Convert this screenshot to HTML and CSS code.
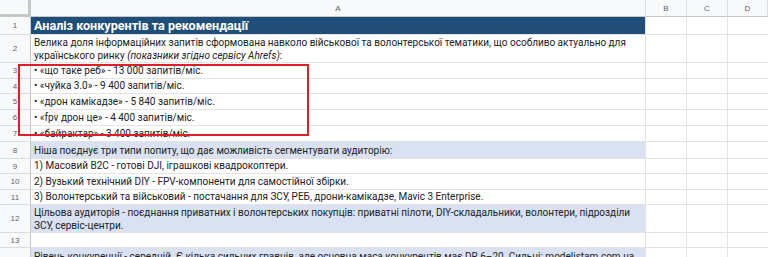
FILE: index.html
```html
<!DOCTYPE html>
<html lang="uk">
<head>
    <meta charset="UTF-8">
    <meta name="viewport" content="width=device-width, initial-scale=1.0">
    <title>Аналіз конкурентів</title>
    <link rel="stylesheet" href="styles.css">
</head>
<body>
    <div class="sheet">
        <div class="grid">
            <!-- column headers -->
            <div class="corner"></div>
            <div class="col-head">A</div>
            <div class="col-head">B</div>
            <div class="col-head">C</div>
            <div class="col-head last">D</div>

            <div class="row-num">1</div>
            <div class="cell title">Аналіз конкурентів та рекомендації</div>
            <div class="cell"></div><div class="cell"></div><div class="cell last"></div>

            <div class="row-num">2</div>
            <div class="cell wrap">Велика доля інформаційних запитів сформована навколо військової та волонтерської тематики, що особливо актуально для українського ринку <em>(показники згідно сервісу Ahrefs)</em>:</div>
            <div class="cell"></div><div class="cell"></div><div class="cell last"></div>

            <div class="row-num">3</div>
            <div class="cell">• «що таке реб» - 13 000 запитів/міс.</div>
            <div class="cell"></div><div class="cell"></div><div class="cell last"></div>

            <div class="row-num">4</div>
            <div class="cell">• «чуйка 3.0» - 9 400 запитів/міс.</div>
            <div class="cell"></div><div class="cell"></div><div class="cell last"></div>

            <div class="row-num">5</div>
            <div class="cell">• «дрон камікадзе» - 5 840 запитів/міс.</div>
            <div class="cell"></div><div class="cell"></div><div class="cell last"></div>

            <div class="row-num">6</div>
            <div class="cell">• «fpv дрон це» - 4 400 запитів/міс.</div>
            <div class="cell"></div><div class="cell"></div><div class="cell last"></div>

            <div class="row-num">7</div>
            <div class="cell">• «байрактар» - 3 400 запитів/міс.</div>
            <div class="cell"></div><div class="cell"></div><div class="cell last"></div>

            <div class="row-num">8</div>
            <div class="cell accent">Ніша поєднує три типи попиту, що дає можливість сегментувати аудиторію:</div>
            <div class="cell"></div><div class="cell"></div><div class="cell last"></div>

            <div class="row-num">9</div>
            <div class="cell">1) Масовий B2C - готові DJI, іграшкові квадрокоптери.</div>
            <div class="cell"></div><div class="cell"></div><div class="cell last"></div>

            <div class="row-num">10</div>
            <div class="cell">2) Вузький технічний DIY - FPV-компоненти для самостійної збірки.</div>
            <div class="cell"></div><div class="cell"></div><div class="cell last"></div>

            <div class="row-num">11</div>
            <div class="cell">3) Волонтерський та військовий - постачання для ЗСУ, РЕБ, дрони-камікадзе, Mavic 3 Enterprise.</div>
            <div class="cell"></div><div class="cell"></div><div class="cell last"></div>

            <div class="row-num">12</div>
            <div class="cell accent wrap">Цільова аудиторія - поєднання приватних і волонтерських покупців: приватні пілоти, DIY-складальники, волонтери, підрозділи ЗСУ, сервіс-центри.</div>
            <div class="cell"></div><div class="cell"></div><div class="cell last"></div>

            <div class="row-num">13</div>
            <div class="cell"></div>
            <div class="cell"></div><div class="cell"></div><div class="cell last"></div>

            <div class="row-num"></div>
            <div class="cell accent top">Рівень конкуренції - середній. Є кілька сильних гравців, але основна маса конкурентів має DR 6–20. Сильні: modelistam.com.ua</div>
            <div class="cell"></div><div class="cell"></div><div class="cell last"></div>
        </div>

        <div class="highlight"></div>
    </div>
</body>
</html>
```

FILE: styles.css
```css
* {
    box-sizing: border-box;
    margin: 0;
    padding: 0;
}
body {
    font-family: 'Liberation Sans', Arial, sans-serif;
    background-color: #fff;
    overflow: hidden;
}
.sheet {
    position: relative;
    width: 768px;
    height: 257px;
    overflow: hidden;
}
.grid {
    display: grid;
    grid-template-columns: 31px 615px 41px 41px 40px;
    grid-template-rows: 17px 18px 28px 16px 15px 16px 16px 16px 17px 15px 16px 15px 28px 15px 60px;
}
.corner, .col-head, .row-num {
    background-color: #f8f9fa;
    color: #5f6368;
    font-size: 8px;
    border-right: 1px solid #c4c7c5;
    border-bottom: 1px solid #c4c7c5;
    display: flex;
    align-items: center;
    justify-content: center;
}
.col-head {
    border-right: 1px solid #dadce0;
}
.corner {
    border-right: 3px solid #c4c7c5;
    border-bottom: 3px solid #c4c7c5;
}
.row-num {
    border-right: 1px solid #c4c7c5;
    border-bottom: 1px solid #dadce0;
}
.cell {
    border-right: 1px solid #e2e3e3;
    border-bottom: 1px solid #e2e3e3;
    font-family: Roboto, 'Liberation Sans', Arial, sans-serif;
    font-size: 10px;
    line-height: 13px;
    color: #202124;
    padding: 0 3px 1px;
    display: flex;
    align-items: flex-end;
    white-space: nowrap;
    overflow: hidden;
}
.cell.last {
    border-right: none;
}
.cell.wrap {
    display: block;
    white-space: normal;
    padding-top: 1px;
}
.cell.wrap em {
    font-style: italic;
}
.cell.title {
    background-color: #1f4e79;
    color: #fff;
    font-size: 12.6px;
    font-weight: bold;
    line-height: 16px;
    padding-bottom: 0;
}
.cell.accent {
    background-color: #d9e1f2;
}
.cell.top {
    align-items: flex-start;
    padding-top: 2px;
}
.highlight {
    position: absolute;
    left: 18px;
    top: 64px;
    width: 291px;
    height: 72px;
    border: 2px solid #dc2027;
}
```
